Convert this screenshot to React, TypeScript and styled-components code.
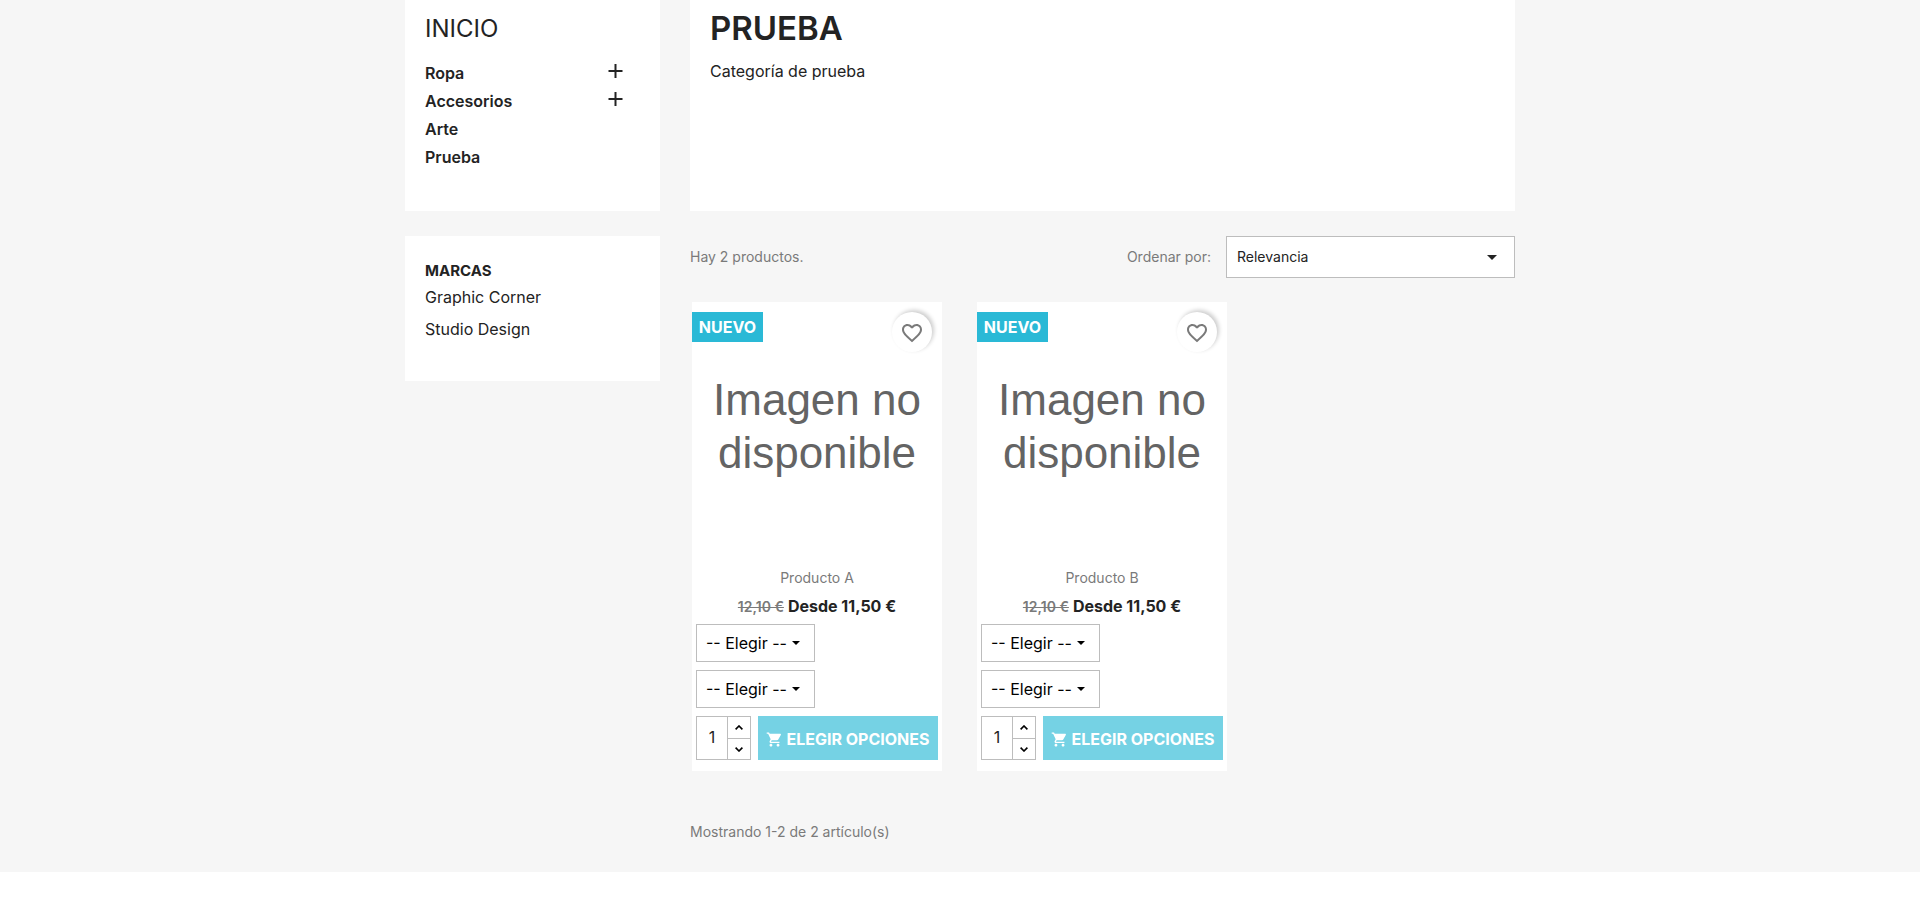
import React, { useState } from 'react';
import styled, { createGlobalStyle } from 'styled-components';

const GlobalStyle = createGlobalStyle`
  *, *::before, *::after { box-sizing: border-box; }
  body {
    margin: 0;
    background: #fff;
    color: #232323;
    font-family: Inter, "Noto Sans", sans-serif;
    font-size: 14px;
    line-height: 20px;
  }
  h1, h2, h3, p, ul { margin: 0; padding: 0; }
  ul { list-style: none; }
  a { color: inherit; text-decoration: none; }
  button, input, select { font: inherit; color: inherit; margin: 0; border-radius: 0; }
`;

const Page = styled.div`
  background: #f6f6f6;
`;

const Container = styled.div`
  max-width: 1140px;
  margin: 0 auto;
  padding: 0 15px 30px;
  display: grid;
  grid-template-columns: 255px minmax(0, 1fr);
  gap: 30px;
  align-items: start;

  @media (max-width: 800px) {
    grid-template-columns: minmax(0, 1fr);
  }
`;

const Sidebar = styled.aside`
  display: flex;
  flex-direction: column;
  gap: 25px;
`;

const CategoryCard = styled.nav`
  background: #fff;
  min-height: 211px;
  padding: 14px 20px 20px;
`;

const CategoryHome = styled.a`
  display: block;
  font-size: 24px;
  line-height: 30px;
  margin-bottom: 15px;
`;

const CategoryItem = styled.li`
  display: flex;
  align-items: center;
  justify-content: space-between;
  height: 28px;
  padding-right: 17px;
  font-size: 16px;
  font-weight: 600;
`;

const ExpandButton = styled.button`
  display: flex;
  padding: 0 0 4px;
  border: 0;
  background: none;
  cursor: pointer;
`;

const BrandCard = styled.section`
  background: #fff;
  padding: 25px 20px 36px;
`;

const BrandTitle = styled.h2`
  font-size: 15px;
  line-height: 20px;
  font-weight: 700;
`;

const BrandItem = styled.li`
  font-size: 16px;
  line-height: 32px;
`;

const Main = styled.main`
  display: flex;
  flex-direction: column;
`;

const CategoryHeader = styled.section`
  background: #fff;
  min-height: 211px;
  padding: 8px 20px 20px;
`;

const CategoryTitle = styled.h1`
  font-size: 33px;
  line-height: 40px;
  font-weight: 600;
`;

const CategoryText = styled.p`
  margin-top: 13px;
  font-size: 16px;
  line-height: 20px;
`;

const SortBar = styled.div`
  display: flex;
  align-items: center;
  justify-content: space-between;
  flex-wrap: wrap;
  margin: 25px 0 24px;
  color: #7a7a7a;
`;

const SortControl = styled.div`
  display: flex;
  align-items: center;
  gap: 15px;
`;

const SelectBox = styled.span<{ $wide?: boolean }>`
  position: relative;
  display: block;
  width: ${(p) => (p.$wide ? '289px' : '119px')};
  color: ${(p) => (p.$wide ? '#232323' : '#000')};

  select {
    display: block;
    appearance: none;
    width: 100%;
    height: ${(p) => (p.$wide ? '42px' : '38px')};
    padding: 0 ${(p) => (p.$wide ? '10px' : '9px')};
    border: 1px solid #bdbdbd;
    background: #fff;
    font-size: ${(p) => (p.$wide ? '14px' : '16px')};
  }

  svg {
    position: absolute;
    top: 50%;
    right: ${(p) => (p.$wide ? '18px' : '15px')};
    margin-top: -2px;
    pointer-events: none;
  }
`;

const ProductGrid = styled.div`
  display: flex;
  flex-wrap: wrap;
  gap: 35px;
  padding: 0 2px;
`;

const Card = styled.article`
  position: relative;
  width: 250px;
  padding-bottom: 11px;
  background: #fff;
`;

const Flag = styled.span`
  position: absolute;
  top: 10px;
  left: 0;
  width: 71px;
  background: #2ab9d6;
  color: #fff;
  font-size: 16px;
  line-height: 30px;
  font-weight: 700;
  text-align: center;
`;

const WishButton = styled.button`
  position: absolute;
  top: 10px;
  right: 10px;
  display: flex;
  align-items: center;
  justify-content: center;
  width: 40px;
  height: 40px;
  padding: 2px 0 0;
  border: 0;
  && { border-radius: 50%; }
  background: #fff;
  && { color: #7a7a7a; }
  box-shadow: 2px -2px 4px 0 rgba(0, 0, 0, 0.2);
  cursor: pointer;
`;

const ImagePlaceholder = styled.a`
  display: flex;
  align-items: center;
  justify-content: center;
  height: 250px;
  padding-bottom: 2px;
  && { color: #646464; }
  font-family: "Liberation Sans", Arial, sans-serif;
  font-size: 44px;
  line-height: 53px;
  text-align: center;
`;

const ProductName = styled.h3`
  margin-top: 16px;
  font-size: 14px;
  line-height: 20px;
  font-weight: 400;
  color: #7a7a7a;
  text-align: center;
`;

const Prices = styled.p`
  display: flex;
  justify-content: center;
  align-items: baseline;
  gap: 4px;
  margin-top: 8px;
  line-height: 20px;
`;

const OldPrice = styled.s`
  font-size: 14px;
  font-weight: 600;
  color: #7a7a7a;
`;

const Price = styled.span`
  font-size: 16px;
  font-weight: 700;
`;

const Options = styled.form`
  display: flex;
  flex-direction: column;
  gap: 8px;
  margin-top: 7px;
  padding: 0 4px;
`;

const BuyRow = styled.div`
  display: flex;
  gap: 7px;
`;

const Quantity = styled.div`
  display: grid;
  grid-template-columns: 30px 23px;
  grid-template-rows: 1fr 1fr;
  width: 55px;
  height: 44px;
  border: 1px solid #bdbdbd;

  input {
    grid-row: 1 / 3;
    min-width: 0;
    padding: 0 0 2px;
    border: 0;
    background: #fff;
    font-size: 16px;
    text-align: center;
  }
`;

const StepButton = styled.button`
  display: flex;
  align-items: center;
  justify-content: center;
  padding: 0;
  border: 0;
  border-left: 1px solid #bdbdbd;
  background: #fff;
  cursor: pointer;

  & + & { border-top: 1px solid #bdbdbd; }
`;

const BuyButton = styled.button`
  display: flex;
  flex: 1;
  align-items: center;
  justify-content: center;
  gap: 3px;
  height: 44px;
  padding: 2px 0 0;
  border: 0;
  background: #75d2e4;
  && { color: #fff; }
  font-size: 16px;
  font-weight: 700;
  white-space: nowrap;
`;

const Summary = styled.p`
  margin-top: 51px;
  color: #7a7a7a;
`;

const PlusIcon = () => (
  <svg width="15" height="14" viewBox="0 0 15 14" aria-hidden="true">
    <path d="M0.5 7h14M7.5 0v14" stroke="#232323" strokeWidth="2" />
  </svg>
);

const CaretIcon = ({ size = 8 }: { size?: number }) => (
  <svg width={size} height={size / 2} viewBox="0 0 10 5" aria-hidden="true">
    <path d="M0 0h10L5 5z" fill="currentColor" />
  </svg>
);

const HeartIcon = () => (
  <svg width="24" height="24" viewBox="0 0 24 24" aria-hidden="true">
    <path
      fill="currentColor"
      d="M16.5 3c-1.74 0-3.41.81-4.5 2.09C10.91 3.81 9.24 3 7.5 3 4.42 3 2 5.42 2 8.5c0 3.78 3.4 6.86 8.55 11.54L12 21.35l1.45-1.32C18.6 15.36 22 12.28 22 8.5 22 5.42 19.58 3 16.5 3zm-4.4 15.55l-.1.1-.1-.1C7.14 14.24 4 11.39 4 8.5 4 6.5 5.5 5 7.5 5c1.54 0 3.04.99 3.57 2.36h1.87C13.46 5.99 14.96 5 16.5 5c2 0 3.5 1.5 3.5 3.5 0 2.89-3.14 5.74-7.9 10.05z"
    />
  </svg>
);

const CartIcon = () => (
  <svg width="17" height="17" viewBox="0 0 24 24" aria-hidden="true">
    <path
      fill="currentColor"
      d="M7 18c-1.1 0-1.99.9-1.99 2S5.9 22 7 22s2-.9 2-2-.9-2-2-2zM1 2v2h2l3.6 7.59-1.35 2.45c-.16.28-.25.61-.25.96 0 1.1.9 2 2 2h12v-2H7.42c-.14 0-.25-.11-.25-.25l.03-.12.9-1.63h7.45c.75 0 1.41-.41 1.75-1.03l3.58-6.49A1 1 0 0 0 20 4H5.21l-.94-2H1zm16 16c-1.1 0-1.99.9-1.99 2s.89 2 1.99 2 2-.9 2-2-.9-2-2-2z"
    />
  </svg>
);

const ChevronIcon = ({ up = false }: { up?: boolean }) => (
  <svg width="8" height="5" viewBox="0 0 8 5" aria-hidden="true">
    <path
      d={up ? 'M0.6 4.4L4 1l3.4 3.4' : 'M0.6 0.6L4 4l3.4-3.4'}
      fill="none"
      stroke="#000"
      strokeWidth="1.6"
    />
  </svg>
);

const categories = [
  { name: 'Ropa', expandable: true },
  { name: 'Accesorios', expandable: true },
  { name: 'Arte', expandable: false },
  { name: 'Prueba', expandable: false },
];

const brands = ['Graphic Corner', 'Studio Design'];
const products = ['Producto A', 'Producto B'];

function ProductCard({ name }: { name: string }) {
  const [quantity, setQuantity] = useState(1);
  return (
    <Card>
      <ImagePlaceholder href="#" aria-label={name}>
        <span>
          Imagen no
          <br />
          disponible
        </span>
      </ImagePlaceholder>
      <Flag>NUEVO</Flag>
      <WishButton type="button" aria-label="Añadir a favoritos">
        <HeartIcon />
      </WishButton>
      <ProductName>
        <a href="#">{name}</a>
      </ProductName>
      <Prices>
        <OldPrice>12,10 €</OldPrice>
        <Price>Desde 11,50 €</Price>
      </Prices>
      <Options onSubmit={(e) => e.preventDefault()}>
        {[1, 2].map((n) => (
          <SelectBox key={n}>
            <select aria-label={`Opción ${n} de ${name}`}>
              <option>-- Elegir --</option>
            </select>
            <CaretIcon />
          </SelectBox>
        ))}
        <BuyRow>
          <Quantity>
            <input
              type="text"
              inputMode="numeric"
              aria-label="Cantidad"
              value={quantity}
              onChange={(e) => setQuantity(Number(e.target.value) || 1)}
            />
            <StepButton type="button" aria-label="Aumentar" onClick={() => setQuantity(quantity + 1)}>
              <ChevronIcon up />
            </StepButton>
            <StepButton
              type="button"
              aria-label="Reducir"
              onClick={() => setQuantity(Math.max(1, quantity - 1))}
            >
              <ChevronIcon />
            </StepButton>
          </Quantity>
          <BuyButton type="submit">
            <CartIcon />
            ELEGIR OPCIONES
          </BuyButton>
        </BuyRow>
      </Options>
    </Card>
  );
}

export default function App() {
  return (
    <>
      <GlobalStyle />
      <Page>
        <Container>
          <Sidebar>
            <CategoryCard>
              <CategoryHome href="#">INICIO</CategoryHome>
              <ul>
                {categories.map((c) => (
                  <CategoryItem key={c.name}>
                    <a href="#">{c.name}</a>
                    {c.expandable && (
                      <ExpandButton type="button" aria-label={`Desplegar ${c.name}`}>
                        <PlusIcon />
                      </ExpandButton>
                    )}
                  </CategoryItem>
                ))}
              </ul>
            </CategoryCard>
            <BrandCard>
              <BrandTitle>
                <a href="#">MARCAS</a>
              </BrandTitle>
              <ul>
                {brands.map((b) => (
                  <BrandItem key={b}>
                    <a href="#">{b}</a>
                  </BrandItem>
                ))}
              </ul>
            </BrandCard>
          </Sidebar>
          <Main>
            <CategoryHeader>
              <CategoryTitle>PRUEBA</CategoryTitle>
              <CategoryText>Categoría de prueba</CategoryText>
            </CategoryHeader>
            <SortBar>
              <p>Hay 2 productos.</p>
              <SortControl>
                <label htmlFor="sort">Ordenar por:</label>
                <SelectBox $wide>
                  <select id="sort">
                    <option>Relevancia</option>
                  </select>
                  <CaretIcon size={10} />
                </SelectBox>
              </SortControl>
            </SortBar>
            <ProductGrid>
              {products.map((name) => (
                <ProductCard key={name} name={name} />
              ))}
            </ProductGrid>
            <Summary>Mostrando 1-2 de 2 artículo(s)</Summary>
          </Main>
        </Container>
      </Page>
    </>
  );
}
